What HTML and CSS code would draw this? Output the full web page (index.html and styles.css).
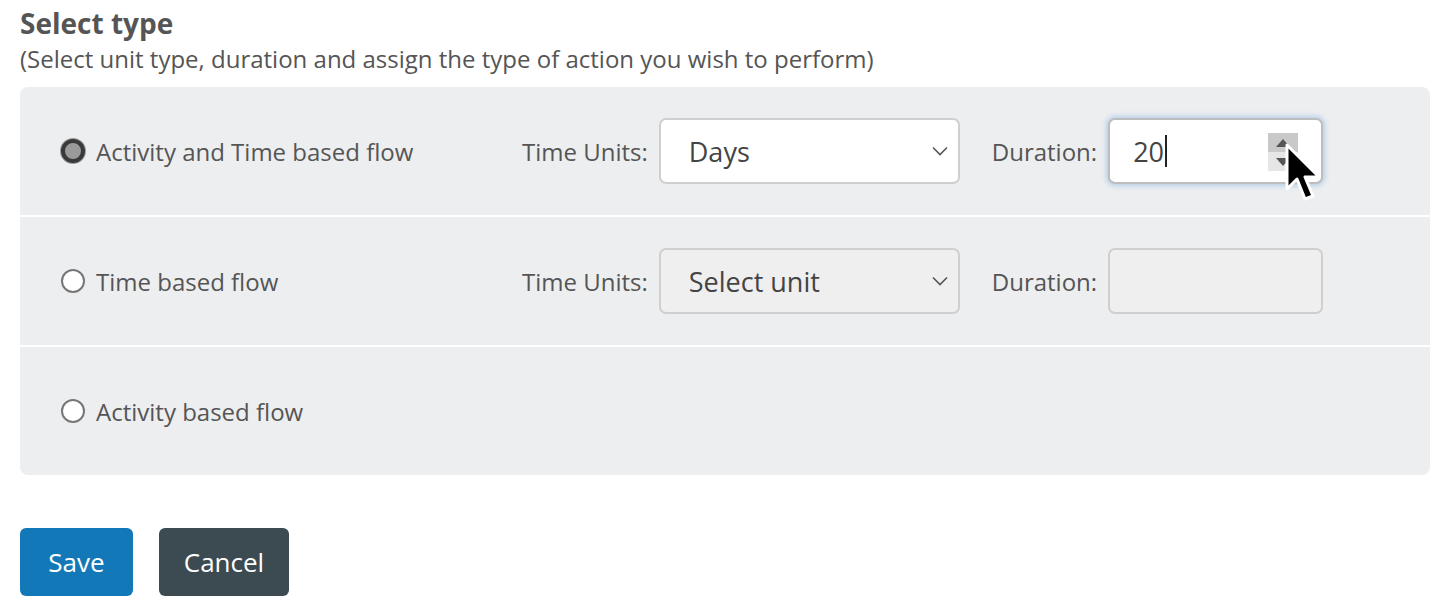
FILE: index.html
```html
<!DOCTYPE html>
<html lang="en">
<head>
    <meta charset="UTF-8">
    <meta name="viewport" content="width=device-width, initial-scale=1.0">
    <title>Select type</title>
    <link rel="stylesheet" href="styles.css">
</head>
<body>

    <div class="flow-form">
        <h2 class="section-title">Select type</h2>
        <p class="section-hint">(Select unit type, duration and assign the type of action you wish to perform)</p>

        <div class="type-panel">
            <!-- Activity and Time based -->
            <div class="type-row">
                <label class="choice">
                    <span class="radio checked"></span>
                    Activity and Time based flow
                </label>
                <span class="field-label">Time Units:</span>
                <div class="select-box">
                    <span>Days</span>
                    <svg class="chevron" width="16" height="10" viewBox="0 0 16 10"><path d="M1 1.5 L8 8.5 L15 1.5" fill="none" stroke="#555" stroke-width="1.6"/></svg>
                </div>
                <span class="field-label">Duration:</span>
                <div class="number-box focused">
                    <span>20</span><span class="caret"></span>
                    <div class="spinner">
                        <div class="spin-up"><svg width="14" height="8" viewBox="0 0 14 8"><path d="M7 0 L14 8 L0 8 Z" fill="#555"/></svg></div>
                        <div class="spin-down"><svg width="14" height="8" viewBox="0 0 14 8"><path d="M0 0 L14 0 L7 8 Z" fill="#555"/></svg></div>
                    </div>
                    <svg class="pointer" width="48" height="70" viewBox="0 0 48 70">
                        <path d="M3 3 L3 47 L13 37 L21 57 L29 54 L21 35 L35 35 Z" fill="#000" stroke="#fff" stroke-width="3" stroke-linejoin="round"/>
                    </svg>
                </div>
            </div>

            <!-- Time based -->
            <div class="type-row">
                <label class="choice">
                    <span class="radio"></span>
                    Time based flow
                </label>
                <span class="field-label">Time Units:</span>
                <div class="select-box disabled">
                    <span>Select unit</span>
                    <svg class="chevron" width="16" height="10" viewBox="0 0 16 10"><path d="M1 1.5 L8 8.5 L15 1.5" fill="none" stroke="#555" stroke-width="1.6"/></svg>
                </div>
                <span class="field-label">Duration:</span>
                <div class="number-box disabled"></div>
            </div>

            <!-- Activity based -->
            <div class="type-row">
                <label class="choice">
                    <span class="radio"></span>
                    Activity based flow
                </label>
            </div>
        </div>

        <div class="form-buttons">
            <button type="submit" class="btn btn-save">Save</button>
            <button type="button" class="btn btn-cancel">Cancel</button>
        </div>
    </div>

</body>
</html>
```

FILE: styles.css
```css
body {
    font-family: "Open Sans", "Noto Sans", sans-serif;
    background-color: #fff;
    color: #555;
    margin: 0;
    padding: 6px 20px 0 20px;
}

.section-title {
    font-size: 28px;
    font-weight: bold;
    color: #555;
    margin: 0;
    line-height: 35px;
}

.section-hint {
    font-size: 24px;
    color: #555;
    margin: 2px 0 0 0;
    line-height: 32px;
}

.type-panel {
    margin-top: 12px;
    width: 1410px;
    background-color: #fff;
    border-radius: 8px;
    overflow: hidden;
    display: flex;
    flex-direction: column;
    gap: 2px;
}

.type-row {
    background-color: #edeef0;
    height: 128px;
    display: flex;
    align-items: center;
    padding-left: 41px;
    font-size: 24px;
}

.choice {
    width: 461px;
    display: flex;
    align-items: center;
    gap: 11px;
    color: #555;
}

.radio {
    width: 24px;
    height: 24px;
    border-radius: 50%;
    border: 2px solid #777;
    background-color: #fff;
    box-sizing: border-box;
    flex-shrink: 0;
}

.radio.checked {
    border: 4px solid #3a3a3a;
    background-color: #9a9a9a;
    box-shadow: 0 0 0 1px #999;
}

.field-label {
    margin-right: 11px;
    color: #555;
}

.select-box,
.number-box {
    height: 66px;
    border: 2px solid #cfcfcf;
    border-radius: 7px;
    background-color: #fff;
    box-sizing: border-box;
    display: flex;
    align-items: center;
    font-size: 27px;
    color: #444;
}

.select-box {
    width: 301px;
    margin-right: 32px;
    padding: 0 10px 0 28px;
    justify-content: space-between;
}

.select-box.disabled,
.number-box.disabled {
    background-color: #efefef;
}

.number-box {
    width: 215px;
    padding-left: 23px;
    position: relative;
}

.number-box.focused {
    border-color: #bdbdbd;
    box-shadow: 0 0 5px 2px rgba(120, 170, 225, 0.45);
}

.caret {
    width: 2px;
    height: 32px;
    background-color: #222;
    margin-left: 1px;
}

.spinner {
    position: absolute;
    left: 158px;
    top: 13px;
    width: 30px;
    height: 38px;
    display: flex;
    flex-direction: column;
}

.spin-up, .spin-down {
    flex: 1;
    display: flex;
    align-items: center;
    justify-content: center;
}

.spin-up {
    background-color: #c9c9c9;
}

.spin-down {
    background-color: #e6e6e6;
}

.pointer {
    position: absolute;
    left: 174px;
    top: 22px;
}

.form-buttons {
    margin-top: 53px;
    display: flex;
    gap: 26px;
}

.btn {
    font-family: "Open Sans", "Noto Sans", sans-serif;
    font-size: 26px;
    color: #fff;
    border: none;
    border-radius: 6px;
    height: 68px;
    padding: 0;
    cursor: pointer;
}

.btn-save {
    width: 113px;
    background-color: #1378b8;
}

.btn-cancel {
    width: 130px;
    background-color: #3c4a52;
}
```
